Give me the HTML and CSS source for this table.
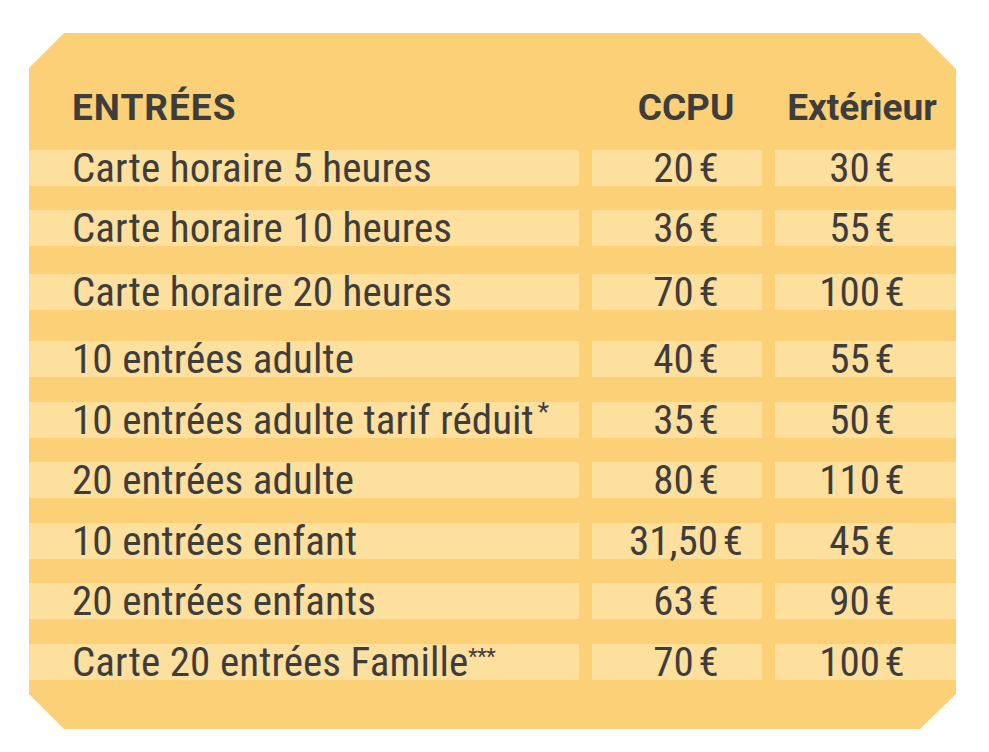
FILE: index.html
```html
<!DOCTYPE html>
<html lang="fr">
<head>
<meta charset="utf-8">
<title>Tarifs entrées</title>
<link rel="stylesheet" href="styles.css">
</head>
<body>
<div class="card">
  <div class="head">
    <div class="cell label">ENTRÉES</div>
    <div class="cell ccpu">CCPU</div>
    <div class="cell ext">Extérieur</div>
  </div>
  <div class="rows">
    <div class="row"><div class="cell label">Carte horaire 5 heures</div><div class="cell ccpu">20&#8239;€</div><div class="cell ext">30&#8239;€</div></div>
    <div class="row"><div class="cell label">Carte horaire 10 heures</div><div class="cell ccpu">36&#8239;€</div><div class="cell ext">55&#8239;€</div></div>
    <div class="row sp4"><div class="cell label">Carte horaire 20 heures</div><div class="cell ccpu">70&#8239;€</div><div class="cell ext">100&#8239;€</div></div>
    <div class="row sp7"><div class="cell label">10 entrées adulte</div><div class="cell ccpu">40&#8239;€</div><div class="cell ext">55&#8239;€</div></div>
    <div class="row sp1"><div class="cell label">10 entrées adulte tarif réduit<sup class="note">*</sup></div><div class="cell ccpu">35&#8239;€</div><div class="cell ext">50&#8239;€</div></div>
    <div class="row"><div class="cell label">20 entrées adulte</div><div class="cell ccpu">80&#8239;€</div><div class="cell ext">110&#8239;€</div></div>
    <div class="row sp1"><div class="cell label">10 entrées enfant</div><div class="cell ccpu">31,50&#8239;€</div><div class="cell ext">45&#8239;€</div></div>
    <div class="row"><div class="cell label">20 entrées enfants</div><div class="cell ccpu">63&#8239;€</div><div class="cell ext">90&#8239;€</div></div>
    <div class="row sp1"><div class="cell label">Carte 20 entrées Famille<sup class="note stars">***</sup></div><div class="cell ccpu">70&#8239;€</div><div class="cell ext">100&#8239;€</div></div>
  </div>
</div>
</body>
</html>
```
FILE: styles.css
```css
html, body {
  margin: 0;
  padding: 0;
  background: #ffffff;
}

body {
  font-family: "Roboto Condensed", Roboto, "Liberation Sans", sans-serif;
  font-stretch: condensed;
  color: #3d3d3d;
}

.card {
  margin: 33px 0 0 29px;
  width: 927px;
  height: 696px;
  box-sizing: border-box;
  padding-top: 57px;
  background: #fbd076;
  clip-path: polygon(35px 0, calc(100% - 36px) 0, 100% 36px, 100% calc(100% - 35px), calc(100% - 36px) 100%, 35px 100%, 0 calc(100% - 35px), 0 35px);
}

.head,
.row {
  display: grid;
  grid-template-columns: 550px 170px 181px;
  grid-template-rows: 36px;
  column-gap: 13px;
  height: 36px;
}

.head {
  font-family: Roboto, "Liberation Sans", sans-serif;
  font-stretch: normal;
  font-weight: 700;
  font-size: 37px;
  line-height: 36px;
  margin-bottom: 24px;
}

.head .label {
  letter-spacing: 1px;
}

.rows {
  display: flex;
  flex-direction: column;
  gap: 24px;
}

.row {
  font-size: 41px;
  line-height: 37px;
  letter-spacing: 0.1px;
}

.row .cell {
  background: #fddf9e;
}

.sp1 { margin-top: 1px; }
.sp4 { margin-top: 4px; }
.sp7 { margin-top: 7px; }

.cell {
  white-space: nowrap;
}

.label {
  padding-left: 43px;
}

.ccpu {
  text-align: center;
  padding-left: 18px;
}

.ext {
  text-align: center;
  padding-right: 7px;
}

.note {
  font-size: 26px;
  line-height: 0;
  vertical-align: 13px;
  margin-left: 4px;
}

.note.stars {
  font-size: 22px;
  vertical-align: 12px;
  margin-left: 0;
  letter-spacing: -0.5px;
}
```
